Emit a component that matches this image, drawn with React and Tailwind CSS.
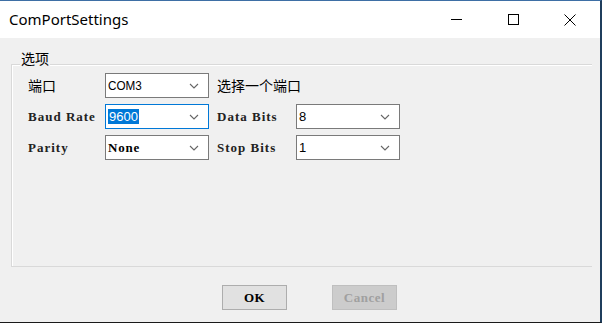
import { useState } from 'react';

const serif = { fontFamily: '"Liberation Serif", "Noto Sans CJK SC", serif' };

function Chevron() {
  return (
    <svg className="w-[10px] h-[6px]" viewBox="0 0 10 6" fill="none" stroke="#666" strokeWidth="1.1">
      <path d="M1 1l4 4 4-4" />
    </svg>
  );
}

function Combo({ value, focused, narrow, bold }) {
  return (
    <div
      className={`w-[104px] h-[25px] bg-white border flex items-center pl-[2px] pr-[9px] ${
        focused ? 'border-[#0078d7]' : 'border-[#7a7a7a]'
      }`}
    >
      <span
        className={`flex-1 text-[13px] leading-[16px] text-black ${narrow ? 'scale-x-90 origin-left' : ''} ${
          bold ? 'font-bold tracking-[0.8px]' : ''
        }`}
        style={bold ? serif : { fontFamily: '"Liberation Sans", Arial, sans-serif' }}
      >
        {focused ? <span className="bg-[#0078d7] text-white px-[1px]">{value}</span> : value}
      </span>
      <Chevron />
    </div>
  );
}

function Label({ children, w = 'w-[77px]' }) {
  return (
    <div className={`${w} text-[13px] font-bold text-[#222] tracking-[1px]`} style={serif}>
      {children}
    </div>
  );
}

export default function App() {
  const [port] = useState('COM3');

  return (
    <div className="w-[602px] h-[323px] bg-[#f0f0f0] flex flex-col overflow-hidden border-t border-[#3e6fa5] border-r-2 border-r-[#1f3d5c] border-b border-b-[#1a1a1a]">
      {/* Title bar */}
      <div className="h-[37px] bg-white flex items-center shrink-0">
        <div className="pl-[9px] text-[15px] text-black flex-1" style={{ fontFamily: '"Noto Sans", "Open Sans", sans-serif' }}>
          ComPortSettings
        </div>
        <div className="flex items-center h-full">
          <div className="w-[57px] h-full flex items-center justify-center">
            <div className="w-[11px] h-px bg-black" />
          </div>
          <div className="w-[57px] h-full flex items-center justify-center">
            <div className="w-[11px] h-[11px] border border-black" />
          </div>
          <div className="w-[58px] h-full flex items-center justify-center pr-[2px]">
            <svg className="w-[12px] h-[12px]" viewBox="0 0 12 12" stroke="black" strokeWidth="1">
              <path d="M0.5 0.5l11 11M11.5 0.5l-11 11" />
            </svg>
          </div>
        </div>
      </div>

      {/* Body */}
      <div className="flex-1 flex flex-col pl-[11px] pr-[8px]">
        <div className="relative mt-[26px] h-[203px] border border-r-0 border-[#d9d9d9] shadow-[inset_1px_1px_0_#fff]">
          <div
            className="absolute -top-[16px] left-[8px] px-[1px] bg-[#f0f0f0] text-[14px] leading-[18px] text-black"
            style={{ fontFamily: '"Noto Sans CJK SC", sans-serif' }}
          >
            选项
          </div>

          <div className="flex flex-col gap-[6px] pt-[8px] pl-[16px]">
            <div className="flex items-center">
              <div className="w-[77px] text-[14px] text-black" style={{ fontFamily: '"Noto Sans CJK SC", sans-serif' }}>
                端口
              </div>
              <Combo value={port} narrow />
              <div className="ml-[8px] text-[14px] text-black" style={{ fontFamily: '"Noto Sans CJK SC", sans-serif' }}>
                选择一个端口
              </div>
            </div>

            <div className="flex items-center">
              <Label>Baud Rate</Label>
              <Combo value="9600" focused />
              <div className="ml-[8px]">
                <Label w="w-[79px]">Data Bits</Label>
              </div>
              <Combo value="8" />
            </div>

            <div className="flex items-center">
              <Label>Parity</Label>
              <Combo value="None" bold />
              <div className="ml-[8px]">
                <Label w="w-[79px]">Stop Bits</Label>
              </div>
              <Combo value="1" />
            </div>
          </div>
        </div>

        <div className="flex gap-[45px] pl-[211px] pt-[18px]">
          <button
            className="w-[65px] h-[25px] bg-[#e1e1e1] border border-[#adadad] text-[13px] font-bold text-black tracking-[0.5px]"
            style={serif}
          >
            OK
          </button>
          <button
            disabled
            className="w-[65px] h-[25px] bg-[#cccccc] border border-[#bfbfbf] text-[13px] font-bold text-[#a0a0a0] tracking-[0.5px]"
            style={serif}
          >
            Cancel
          </button>
        </div>
      </div>
    </div>
  );
}
